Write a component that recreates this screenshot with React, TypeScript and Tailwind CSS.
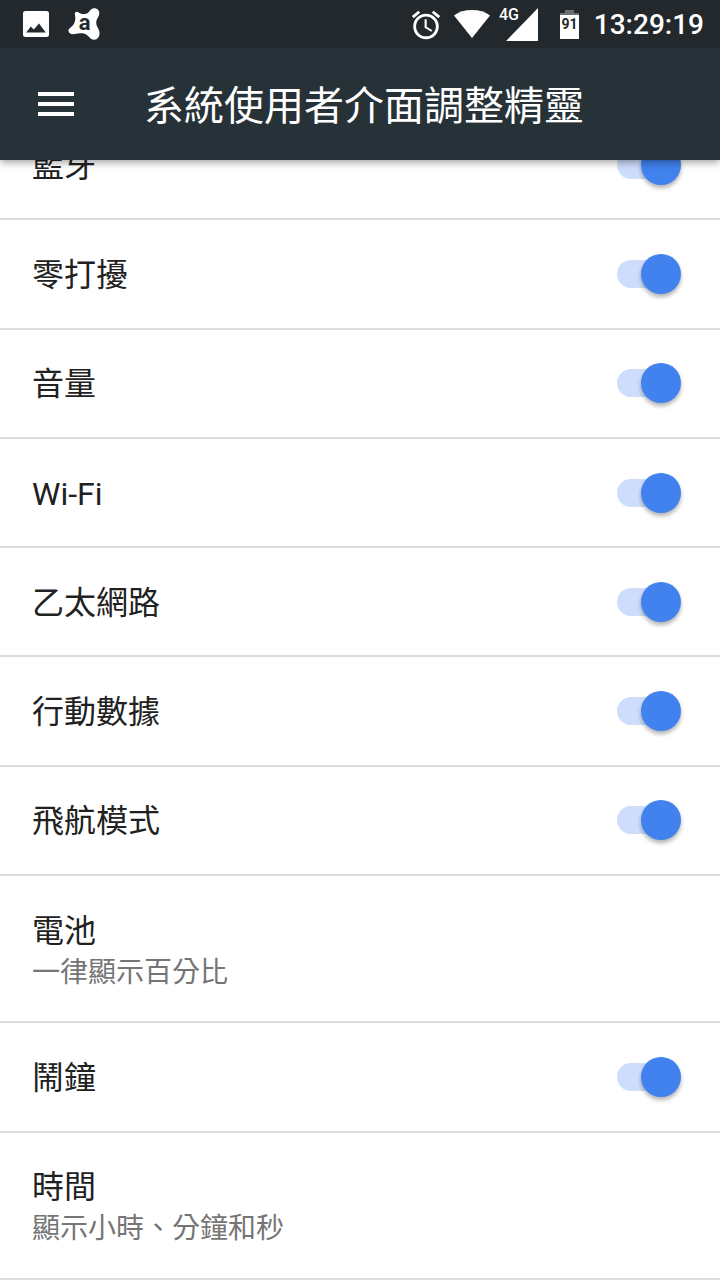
import React from 'react';

type Item = {
  id: string;
  label: string;
  summary?: string;
};

const items: Item[] = [
  { id: 'bluetooth', label: '藍牙' },
  { id: 'dnd', label: '零打擾' },
  { id: 'volume', label: '音量' },
  { id: 'wifi', label: 'Wi-Fi' },
  { id: 'ethernet', label: '乙太網路' },
  { id: 'mobile', label: '行動數據' },
  { id: 'airplane', label: '飛航模式' },
  { id: 'battery', label: '電池', summary: '一律顯示百分比' },
  { id: 'alarm', label: '鬧鐘' },
  { id: 'clock', label: '時間', summary: '顯示小時、分鐘和秒' },
];

const PictureIcon = () => (
  <svg className="w-[26px] h-[26px]" viewBox="0 0 26 26" aria-hidden="true">
    <rect width="26" height="26" rx="2.5" fill="#fff" />
    <path d="M3.2 21.6 7.8 15.4 10.8 18.6 16 12.4 22.8 21.6Z" fill="#22282b" />
  </svg>
);

const AvastIcon = () => (
  <svg className="w-8 h-8" viewBox="0 0 32 32" aria-hidden="true">
    <path
      d="M6.8 6C6.6 3.6 9.2 3 10.8 4.4C13.6 6.6 18.6 6.6 20.8 4C22.4 1.6 24 .2 26.4 .2C29.6 .2 31.8 3 31.2 6.2C30.6 9.6 28.2 11 28.2 14.6C28.2 18 29.8 19.4 31 22.4C32.6 26.6 30.4 31.6 26.4 31.8C22.6 32 21.4 28.6 18.6 26.8C15.4 24.8 11 25.2 7 26C3.6 26.6 .6 25.6 .4 22.8C.4 20.4 3 19.6 5 17.2C7.8 13.8 7.6 9.6 6.8 6Z"
      fill="#fff"
    />
    <text
      x="16.6"
      y="22"
      textAnchor="middle"
      fill="#22282b"
      className="font-['Roboto',sans-serif] text-[22px] font-bold"
    >
      a
    </text>
  </svg>
);

const AlarmIcon = () => (
  <svg className="w-[34px] h-[34px]" viewBox="0 0 24 24" fill="#fff" aria-hidden="true">
    <path d="M22 5.72l-4.6-3.86-1.29 1.53 4.6 3.86L22 5.72zM7.88 3.39L6.6 1.86 2 5.71l1.29 1.53 4.59-3.85zM12.5 8H11v6l4.75 2.85.75-1.23-4-2.37V8zM12 4c-4.97 0-9 4.03-9 9s4.02 9 9 9a9 9 0 1 0 0-18zm0 16c-3.87 0-7-3.13-7-7s3.13-7 7-7 7 3.13 7 7-3.13 7-7 7z" />
  </svg>
);

const WifiIcon = () => (
  <svg className="w-9 h-[30px]" viewBox="0 0 36 30" aria-hidden="true">
    <path d="M0 5.6C5 1.8 11 0 18 0S31 1.8 36 5.6L18 28Z" fill="#fff" />
  </svg>
);

const SignalIcon = () => (
  <svg className="w-10 h-10" viewBox="0 0 40 40" fill="#fff" aria-label="4G">
    <path d="M40 3V36H8Z" />
    <text x="1" y="15" className="font-['Roboto',sans-serif] text-[16px] font-medium">
      4G
    </text>
  </svg>
);

const BatteryIcon = () => (
  <svg className="w-[19px] h-[30px]" viewBox="0 0 19 30" aria-hidden="true">
    <path d="M5 0H14V3H19V6H0V3H5Z" fill="#6a6f71" />
    <path d="M0 5H19V29H0Z" fill="#fff" />
    <text
      x="9.5"
      y="19"
      textAnchor="middle"
      fill="#22282b"
      className="font-['Roboto',sans-serif] text-[14px] font-bold"
    >
      91
    </text>
  </svg>
);

const StatusBar = () => (
  <div className="h-12 shrink-0 bg-[#22282b] flex items-center justify-between pl-[23px] pr-4 text-white">
    <div className="flex items-center gap-[19px]">
      <PictureIcon />
      <AvastIcon />
    </div>
    <div className="flex items-center pt-0.5">
      <AlarmIcon />
      <span className="ml-[11px]">
        <WifiIcon />
      </span>
      <span className="ml-2">
        <SignalIcon />
      </span>
      <span className="ml-[22px]">
        <BatteryIcon />
      </span>
      <time className="ml-[15px] text-[28px] leading-8 font-medium">13:29:19</time>
    </div>
  </div>
);

const Toolbar = () => (
  <header className="h-28 shrink-0 bg-[#273238] flex items-center pl-[38px] pr-8 text-white">
    <button type="button" aria-label="選單" className="flex w-9 flex-col gap-1.5">
      <span className="h-1 bg-white" />
      <span className="h-1 bg-white" />
      <span className="h-1 bg-white" />
    </button>
    <h1 className="ml-[70px] pt-1.5 text-[40px] leading-[48px] font-normal whitespace-nowrap">系統使用者介面調整精靈</h1>
  </header>
);

const Switch = ({ id }: { id: string }) => (
  <input
    id={id}
    type="checkbox"
    role="switch"
    defaultChecked
    className="relative h-10 w-16 shrink-0 cursor-pointer appearance-none before:absolute before:inset-y-1.5 before:left-0 before:w-14 before:rounded-full before:bg-gray-300 checked:before:bg-[#cdddfb] after:absolute after:left-0 after:top-0 after:size-10 after:rounded-full after:bg-gray-50 after:shadow-[0_3px_4px_rgba(0,0,0,0.3)] checked:after:left-6 checked:after:bg-[#4182ee]"
  />
);

const Row = ({ item }: { item: Item }) => {
  if (item.summary) {
    return (
      <li className="flex grow basis-[147px] border-b-2 border-[#dcdcdc]">
        <button type="button" className="flex w-full flex-col justify-center px-8 pt-1 text-left">
          <span className="text-[32px] leading-[44px]">{item.label}</span>
          <span className="text-[28px] leading-10 text-[#757575]">{item.summary}</span>
        </button>
      </li>
    );
  }

  return (
    <li className="flex grow basis-[109px] items-center justify-between border-b-2 border-[#dcdcdc] pl-8 pr-[39px]">
      <label htmlFor={item.id} className="grow pt-0.5 text-[32px] leading-[44px]">
        {item.label}
      </label>
      <Switch id={item.id} />
    </li>
  );
};

export default function App() {
  return (
    <div className="flex min-h-screen flex-col bg-white text-[#212121] font-['Roboto','Noto_Sans_CJK_TC',sans-serif]">
      <div className="sticky top-0 z-10 shadow-[0_2px_8px_rgba(0,0,0,0.4)]">
        <StatusBar />
        <Toolbar />
      </div>
      {/* list is scrolled a little, so the first row slides under the toolbar */}
      <ul className="-mt-[49px] flex grow flex-col">
        {items.map((item) => (
          <Row key={item.id} item={item} />
        ))}
      </ul>
    </div>
  );
}
